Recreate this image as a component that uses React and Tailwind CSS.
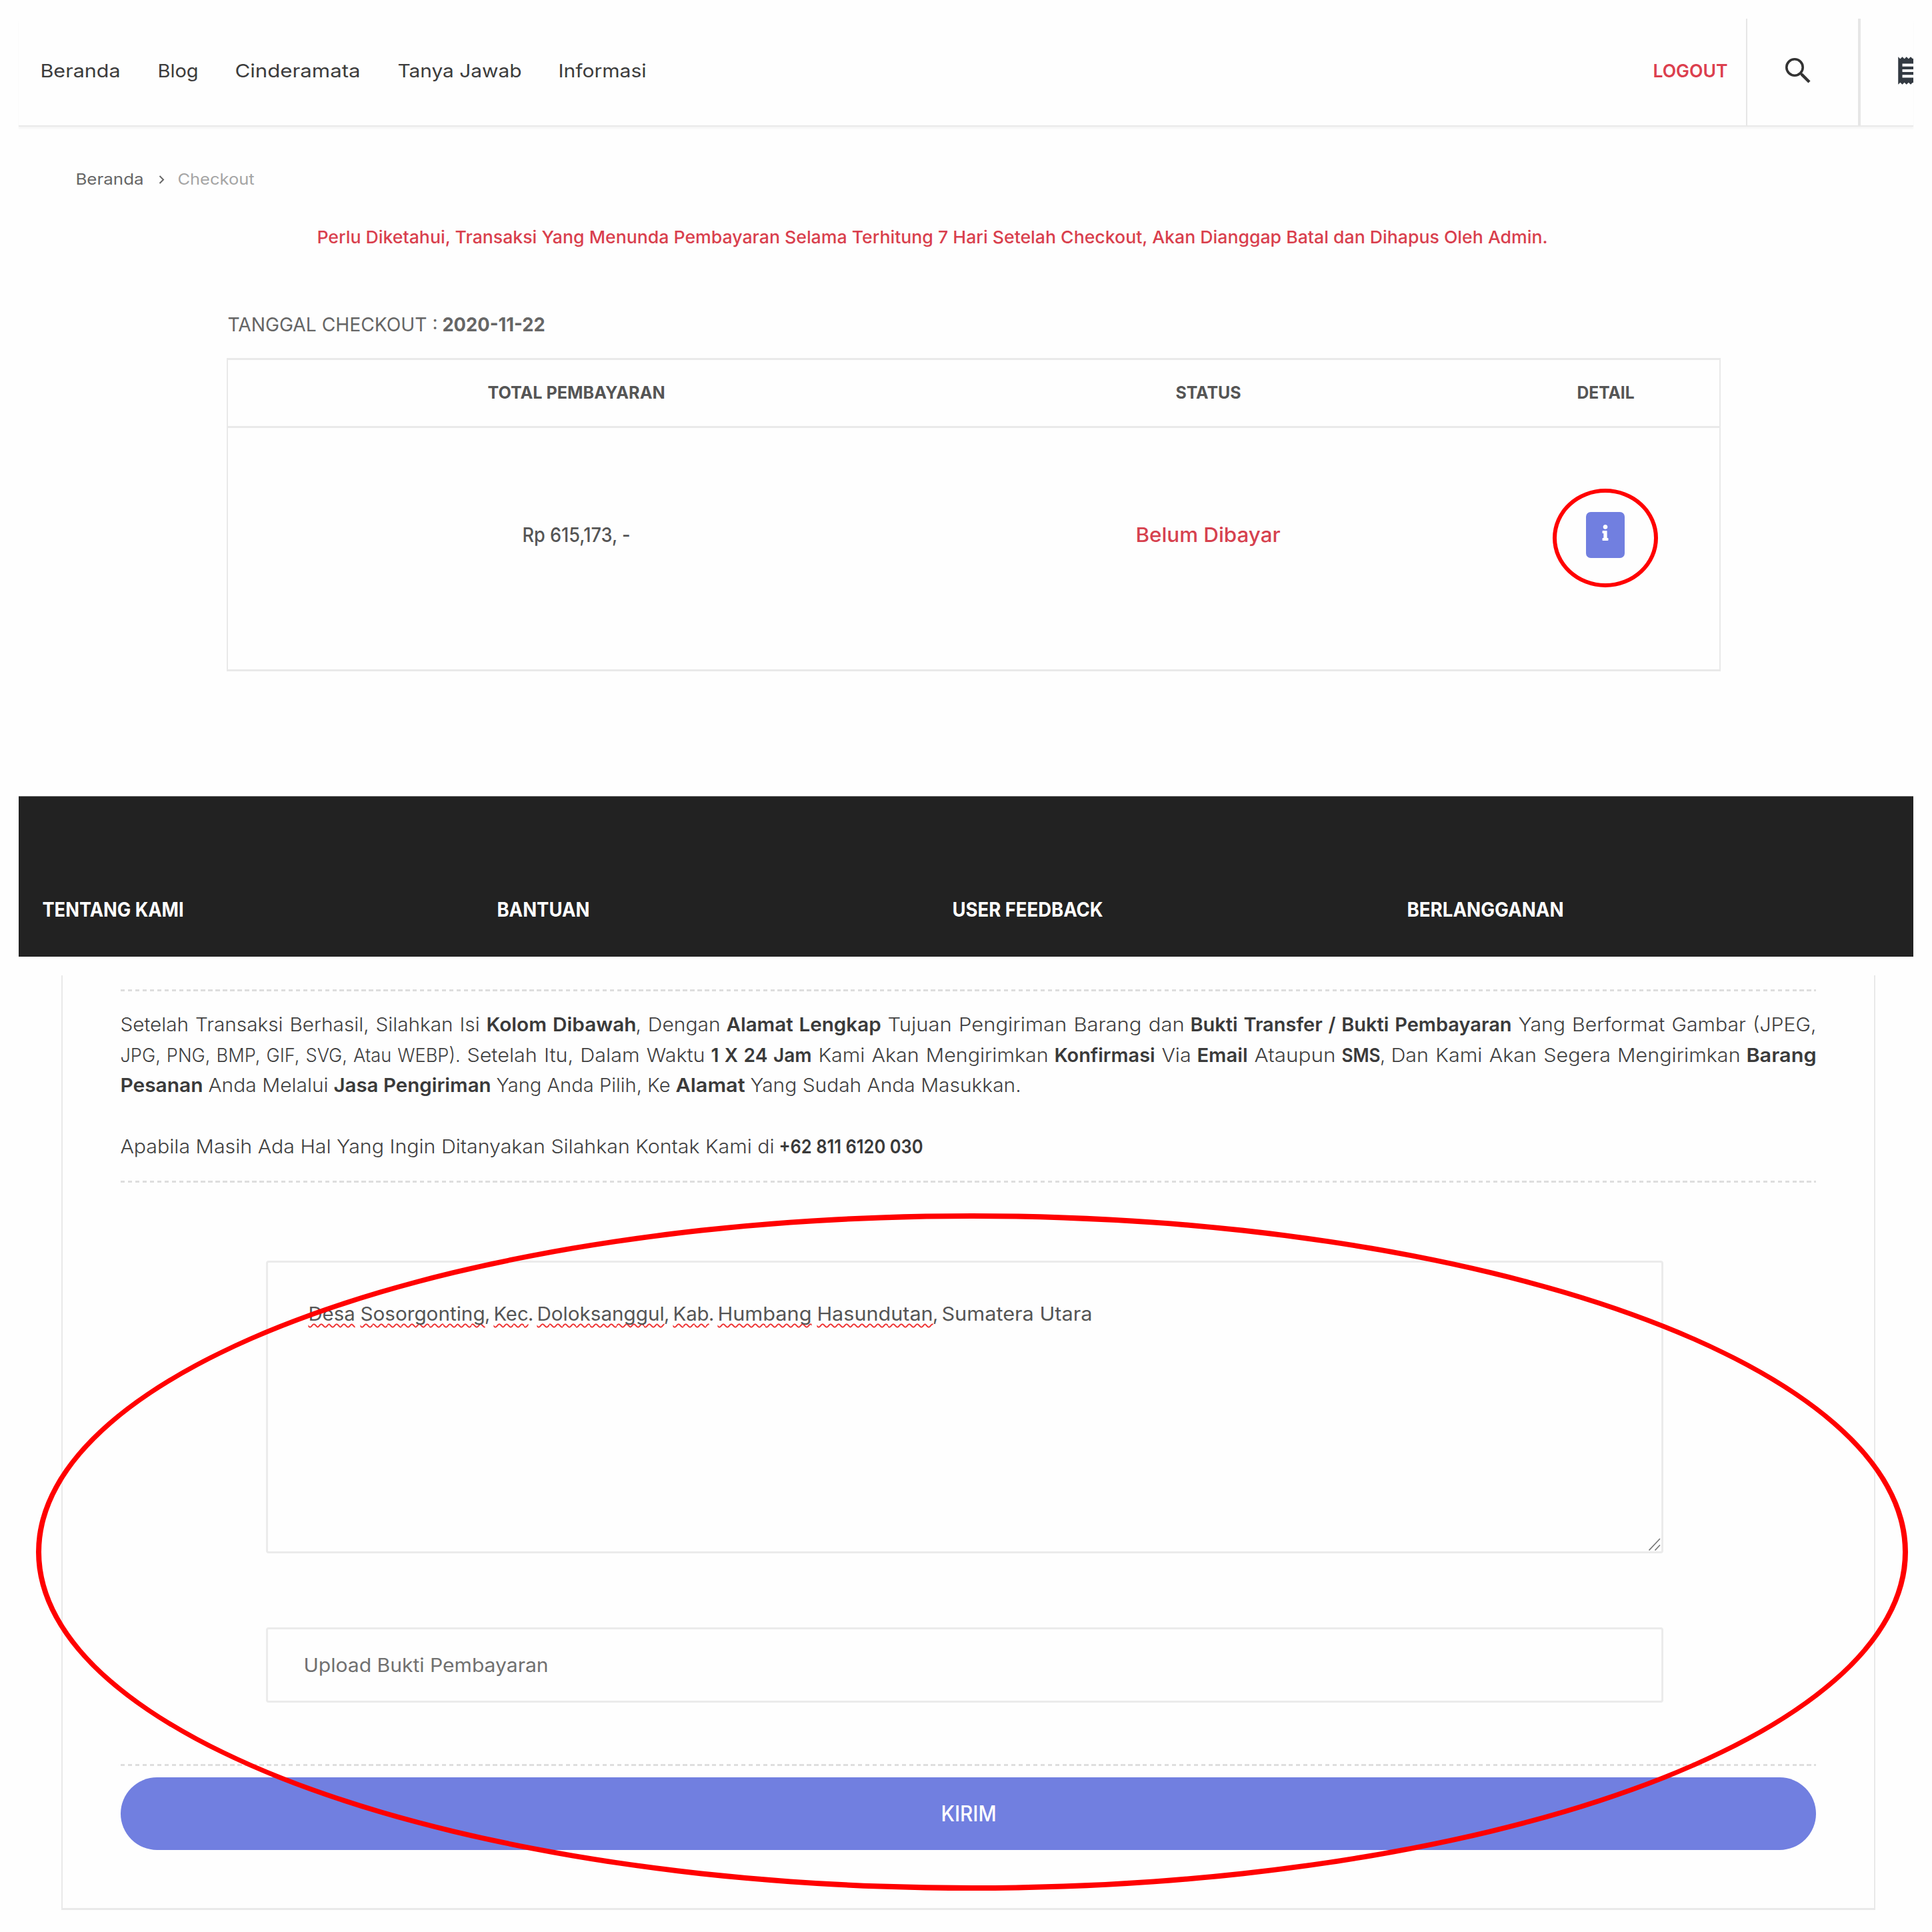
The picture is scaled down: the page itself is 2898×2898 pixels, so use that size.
import { useLayoutEffect, useRef } from "react";
import { MdReceipt } from "react-icons/md";
import { FaInfo } from "react-icons/fa";

// Single-line text stretched so that its glyphs span `w` pixels, side bearings hanging outside.
const BEARING = 0.6;

function Fit({ w, className = "", children }) {
  const ref = useRef(null);
  useLayoutEffect(() => {
    const el = ref.current;
    if (el.textContent.length < 2) return;
    const fit = () => {
      el.style.transform = "none";
      const natural = el.getBoundingClientRect().width;
      el.style.transform = `translateX(${-BEARING}px) scaleX(${(w + 2 * BEARING) / natural})`;
    };
    fit();
    document.fonts.ready.then(fit);
  }, [w, children]);
  return (
    <span className="inline-block whitespace-nowrap" style={{ width: w }}>
      <span ref={ref} className={`inline-block origin-left ${className}`}>{children}</span>
    </span>
  );
}

const Dashes = () => (
  <div className="h-[3px] w-full bg-[repeating-linear-gradient(90deg,#dedede_0px,#dedede_6.5px,transparent_6.5px,transparent_10.95px)]" />
);

const NAV = [
  ["Beranda", 119],
  ["Blog", 60],
  ["Cinderamata", 187],
  ["Tanya Jawab", 185],
  ["Informasi", 131],
];

const FOOTER = [
  ["TENTANG KAMI", 211],
  ["BANTUAN", 138],
  ["USER FEEDBACK", 225],
  ["BERLANGGANAN", 234],
];

// Each entry: text, width, bold, attached to the previous entry
const LINES = [
  [
    ["Setelah Transaksi Berhasil, Silahkan Isi", 538],
    ["Kolom Dibawah", 224, true],
    [", Dengan", 126, false, true],
    ["Alamat Lengkap", 231, true],
    ["Tujuan Pengiriman Barang dan", 444],
    ["Bukti Transfer / Bukti Pembayaran", 481, true],
    ["Yang Berformat Gambar (JPEG,", 446],
  ],
  [
    ["JPG, PNG, BMP, GIF, SVG, Atau WEBP).", 509],
    ["Setelah Itu, Dalam Waktu", 356],
    ["1 X 24 Jam", 150, true],
    ["Kami Akan Mengirimkan", 344],
    ["Konfirmasi", 150, true],
    ["Via", 43],
    ["Email", 75, true],
    ["Ataupun", 121],
    ["SMS", 57, true],
    [",", 6, false, true],
    ["Dan Kami Akan Segera Mengirimkan", 523],
    ["Barang", 104, true],
  ],
];

const STRONG = "font-semibold text-[#3a3a3a]";

const Justified = ({ parts }) => {
  const groups = [];
  parts.forEach((p) => (p[3] ? groups[groups.length - 1].push(p) : groups.push([p])));
  return (
    <p className="flex justify-between [word-spacing:1.5px]">
      {groups.map((g, i) => (
        <span key={i} className="flex">
          {g.map(([text, w, bold]) => (
            <Fit key={text} w={w} className={bold ? STRONG : ""}>{text}</Fit>
          ))}
        </span>
      ))}
    </p>
  );
};

const Misspelt = ({ w, children }) => (
  <Fit w={w} className="underline decoration-wavy decoration-[#ee3333] decoration-[1.6px] underline-offset-[4px] [text-decoration-skip-ink:none]">{children}</Fit>
);

export default function App() {
  return (
    <div className="relative flex h-[2898px] w-[2898px] flex-col overflow-hidden bg-[#fefefe] px-[28px] pt-[28px] font-['Inter','Liberation_Sans',sans-serif] text-[#555]">
      {/* Header */}
      <header className="flex h-[160px] shrink-0 overflow-hidden shadow-[0_2px_0_#e9e9e9,0_5px_2px_#f6f6f6]">
        <nav className="flex items-center gap-[56.5px] pb-[3px] pl-[33px] text-[27.5px] text-[#3c3c3c]">
          {NAV.map(([t, w]) => <Fit key={t} w={w}>{t}</Fit>)}
        </nav>
        <div className="ml-auto flex items-center pr-[28px] pb-[3px] text-[27.5px] font-semibold text-[#dc3f4e]">
          <Fit w={111}>LOGOUT</Fit>
        </div>
        <div className="flex w-[168px] items-center border-l-2 border-[#e6e6e6] pb-[5px] pl-[57px] text-[#333]">
          <svg className="size-[38px]" viewBox="0 0 38 38" fill="none" stroke="currentColor">
            <circle cx="14" cy="14" r="12.2" strokeWidth="3.6" />
            <path d="M22.8 22.8l2.4 2.4" strokeWidth="3.6" />
            <path d="M24.6 24.6L36 36" strokeWidth="4.4" />
          </svg>
        </div>
        <div className="flex w-[83px] items-center overflow-hidden border-l-4 border-[#e6e6e6] pb-[4px] pl-[50px] text-[#333a42]">
          <MdReceipt className="size-[50px] shrink-0" />
        </div>
      </header>

      {/* Breadcrumb */}
      <div className="mt-[62px] flex h-[38px] items-center pl-[86px] text-[23.5px] text-[#666]">
        <Fit w={101}>Beranda</Fit>
        <svg className="ml-[23px] h-[13px] w-[9px]" viewBox="0 0 9 13" fill="none" stroke="#666" strokeWidth="2"><path d="M1.5 1l5.5 5.5L1.5 12" /></svg>
        <span className="ml-[20px] text-[#a5a5a5]"><Fit w={114}>Checkout</Fit></span>
      </div>

      <p className="mt-[48px] h-[40px] pl-[448px] text-[26px] leading-[40px] font-medium text-[#d93f4d]">
        <Fit w={1845}>Perlu Diketahui, Transaksi Yang Menunda Pembayaran Selama Terhitung 7 Hari Setelah Checkout, Akan Dianggap Batal dan Dihapus Oleh Admin.</Fit>
      </p>

      <div className="mt-[91px] flex h-[40px] gap-[8px] pl-[314px] text-[29px] leading-[40px] text-[#666]">
        <Fit w={314}>TANGGAL CHECKOUT :</Fit>
        <Fit w={153} className="font-bold">2020-11-22</Fit>
      </div>

      {/* Order table */}
      <section className="mt-[30px] ml-[312px] h-[470px] w-[2241px] shrink-0 border-x-2 border-y-3 border-[#e9e9e9]">
        <div className="grid h-[102px] grid-cols-[1045px_850px_342px] items-center justify-items-center border-b-3 border-[#e9e9e9] text-[25.5px] font-bold text-[#555]">
          <Fit w={265}>TOTAL PEMBAYARAN</Fit>
          <Fit w={97}>STATUS</Fit>
          <Fit w={85}>DETAIL</Fit>
        </div>
        <div className="grid h-[321px] grid-cols-[1045px_850px_342px] items-center justify-items-center text-[30px] font-medium">
          <Fit w={161}>Rp 615,173, -</Fit>
          <span className="text-[#d6414e]"><Fit w={216}>Belum Dibayar</Fit></span>
          <div className="relative flex h-[69px] w-[58px] items-center justify-center rounded-[7px] bg-[#717fe0] pb-[7px] text-white">
            <FaInfo className="size-[24px]" />
            <div className="absolute top-[-35px] left-[-50px] h-[148px] w-[158px] rounded-[50%] border-[6px] border-[#ff0000]" />
          </div>
        </div>
      </section>

      {/* Footer headings */}
      <footer className="mt-[187px] grid h-[241px] shrink-0 grid-cols-[repeat(4,682.3px)] border-t border-[#777] bg-[#222] pl-[36px] text-[30px] font-bold text-white">
        {FOOTER.map(([t, w]) => <div key={t} className="pt-[147px] leading-[45px]"><Fit w={w}>{t}</Fit></div>)}
      </footer>

      {/* Payment form */}
      <section className="mt-[28px] ml-[64px] h-[1402px] w-[2721px] shrink-0 border-x-2 border-b-3 border-[#e9e9e9] px-[87px] pt-[21px]">
        <Dashes />
        <div className="mt-[27px] h-[257px] text-[29px] leading-[45.7px] font-light text-[#404040]">
          {LINES.map((parts, i) => <Justified key={i} parts={parts} />)}
          <p className="flex gap-[9px]">
            <Fit w={123} className={STRONG}>Pesanan</Fit>
            <Fit w={179}>Anda Melalui</Fit>
            <Fit w={235} className={STRONG}>Jasa Pengiriman</Fit>
            <Fit w={260}>Yang Anda Pilih, Ke</Fit>
            <Fit w={103} className={STRONG}>Alamat</Fit>
            <Fit w={405}>Yang Sudah Anda Masukkan.</Fit>
          </p>
          <p className="mt-[45.7px] flex gap-[8px]">
            <Fit w={980}>Apabila Masih Ada Hal Yang Ingin Ditanyakan Silahkan Kontak Kami di</Fit>
            <Fit w={215} className={STRONG}>+62 811 6120 030</Fit>
          </p>
        </div>
        <Dashes />

        <div className="relative mt-[117px] ml-[218px] h-[439px] w-[2096px] rounded-[4px] border-[3px] border-[#ebebeb] pt-[54px] pl-[61px] text-[28.5px] leading-[46px] text-[#555]">
          <div className="flex gap-[9px]">
            <Misspelt w={69}>Desa</Misspelt>
            <span className="flex"><Misspelt w={186}>Sosorgonting</Misspelt><Fit w={5}>,</Fit></span>
            <span className="flex"><Misspelt w={51}>Kec</Misspelt><Fit w={5}>.</Fit></span>
            <span className="flex"><Misspelt w={190}>Doloksanggul</Misspelt><Fit w={5}>,</Fit></span>
            <span className="flex"><Misspelt w={53}>Kab</Misspelt><Fit w={5}>.</Fit></span>
            <Misspelt w={140}>Humbang</Misspelt>
            <span className="flex"><Misspelt w={173}>Hasundutan</Misspelt><Fit w={5}>,</Fit></span>
            <Fit w={225}>Sumatera Utara</Fit>
          </div>
          <svg className="absolute right-[1px] bottom-[1px] h-[19px] w-[18px]" viewBox="0 0 18 19" stroke="#777" strokeWidth="1.7"><path d="M0.5 18.5L17 1M9.5 18.5L17 10.5" /></svg>
        </div>

        <div className="mt-[111px] ml-[218px] flex h-[113px] w-[2096px] items-center rounded-[4px] border-[3px] border-[#ebebeb] pl-[54px] text-[28px] text-[#707070]">
          <Fit w={366}>Upload Bukti Pembayaran</Fit>
        </div>

        <div className="mt-[92px]"><Dashes /></div>
        <button className="mt-[17px] flex h-[109px] w-full items-center justify-center rounded-full bg-[#717fe0] text-[32px] font-medium text-white">
          <Fit w={82}>KIRIM</Fit>
        </button>
      </section>

      <div className="pointer-events-none absolute top-[1820px] left-[54px] h-[1016px] w-[2808px] rounded-[50%] border-[8px] border-[#ff0000]" />
    </div>
  );
}
